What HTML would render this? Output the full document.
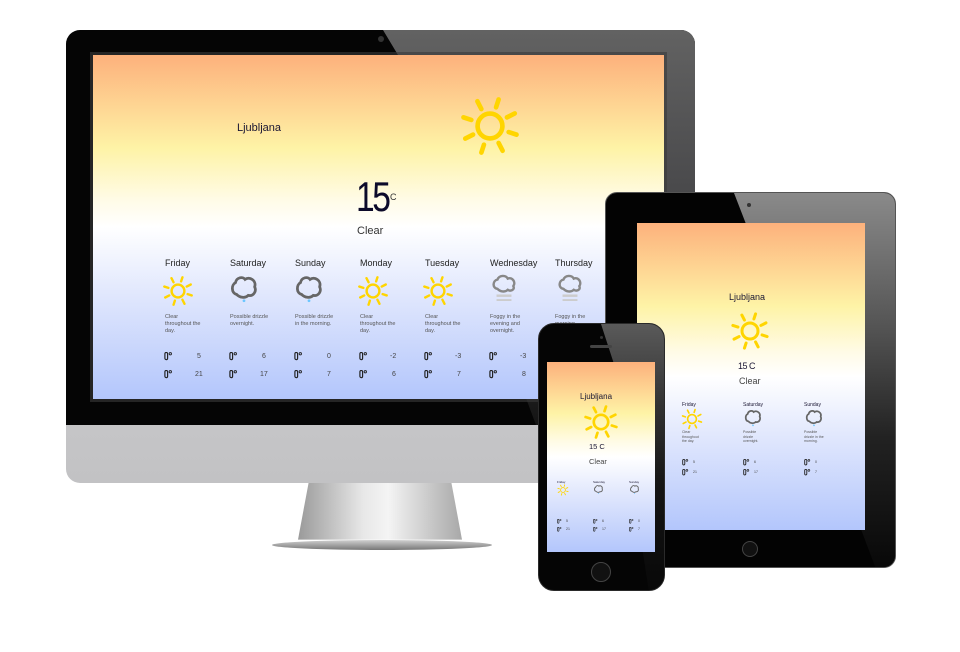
<!DOCTYPE html>
<html><head><meta charset="utf-8"><style>
*{margin:0;padding:0;box-sizing:border-box}
body{width:960px;height:652px;background:#fff;position:relative;overflow:hidden;font-family:"Liberation Sans",sans-serif;color:#1a1633}
.a{position:absolute}
.grad{background:linear-gradient(to bottom,#fdb17c 0%,#fef3a6 27%,#fffbe6 42%,#ffffff 50%,#e3e9fd 68%,#b3c6fc 100%)}
.t{position:absolute;white-space:nowrap}
.d{font-size:9px;color:#222}
.ds{font-size:5.5px;line-height:7px;color:#555;white-space:normal}
.n{font-size:7px;color:#444}
.m{font-size:3.5px;color:#444}
</style></head><body>
<svg width="0" height="0" style="position:absolute">
<defs>
<symbol id="sun" viewBox="-30 -30 60 60"><g stroke="#ffd500" stroke-width="4.5" stroke-linecap="round" fill="none"><circle r="12"/><g transform="rotate(18)"><line x1="0" y1="-19" x2="0" y2="-27"/><line x1="0" y1="19" x2="0" y2="27"/><line x1="-19" y1="0" x2="-27" y2="0"/><line x1="19" y1="0" x2="27" y2="0"/><line x1="13" y1="-13" x2="19" y2="-19"/><line x1="-13" y1="13" x2="-19" y2="19"/><line x1="-13" y1="-13" x2="-19" y2="-19"/><line x1="13" y1="13" x2="19" y2="19"/></g></g></symbol>
<symbol id="cloud" viewBox="0 0 30 30"><path d="M8 20 C3 19 3 11 7 9 C8 4 14 3 16 6 C20 3 27 7 25 13 C27 17 24 22 19 21 C16 24 11 23 8 20 Z" fill="none" stroke="#666" stroke-width="2.6"/><circle cx="15" cy="26" r="1.3" fill="#6cc6ff"/></symbol>
<symbol id="fog" viewBox="0 0 30 30"><path d="M8 17 C2 16 3 8 8 7 C10 2 17 2 19 6 C24 4 28 10 25 14 C27 18 22 20 19 18 C16 21 11 20 8 17 Z" fill="none" stroke="#888" stroke-width="2.6"/><rect x="7" y="23" width="16" height="2.6" fill="#ccc"/><rect x="7" y="28" width="16" height="2" fill="#ccc"/></symbol>
<symbol id="th" viewBox="0 0 10 10"><rect x="1" y="0.5" width="3" height="8" rx="1.5" fill="none" stroke="#222" stroke-width="1.3"/><circle cx="7" cy="2" r="1.3" fill="none" stroke="#222" stroke-width="1"/></symbol>
</defs></svg>

<!-- Monitor -->
<div class="a" style="left:298px;top:478px;width:164px;height:70px;background:linear-gradient(to right,#9a9a9a,#e8e8e8 40%,#f4f4f4 55%,#a8a8a8);clip-path:polygon(7% 0,93% 0,100% 88%,0 88%)"></div>
<div class="a" style="left:272px;top:540px;width:220px;height:10px;border-radius:50%;background:linear-gradient(#d0d0d0,#777)"></div>
<div class="a" style="left:66px;top:30px;width:629px;height:453px;border-radius:14px;background:linear-gradient(to bottom,#dcdcde,#c2c2c4);"></div>
<div class="a" style="left:66px;top:30px;width:629px;height:395px;border-radius:14px 14px 0 0;background:#050505;overflow:hidden">
 <div class="a" style="left:0;top:0;width:629px;height:395px;background:linear-gradient(to bottom,#626262,#4a4a4c 40%,#2a2a2a 75%,#151515);clip-path:polygon(317px 0,629px 0,629px 395px,470px 395px,332px 25px)"></div>
</div>
<div class="a" style="left:90px;top:52px;width:577px;height:350px;border:3px solid #3a3a3a;opacity:.6"></div>
<div class="a" style="left:378px;top:36px;width:6px;height:6px;border-radius:50%;background:#333"></div>
<div class="a grad" style="left:93px;top:55px;width:571px;height:344px;overflow:hidden">
 <div class="t" style="left:144px;top:67px;font-size:11px">Ljubljana</div>
 <svg class="a" style="left:366px;top:40px" width="62" height="62"><use href="#sun"/></svg>
 <div class="t" style="left:263px;top:118px;font-size:42px;letter-spacing:-3px;color:#0c0a2a;transform:scaleX(.8);transform-origin:0 0">15</div>
 <div class="t" style="left:297px;top:137px;font-size:9px;color:#333;z-index:2">C</div>
 <div class="t" style="left:264px;top:170px;font-size:11px;color:#333">Clear</div>

 <div class="t d" style="left:72px;top:203px">Friday</div>
 <svg class="a" style="left:69px;top:220px" width="32" height="32"><use href="#sun"/></svg>
 <div class="t ds" style="left:72px;top:259px;width:40px">Clear throughout the day.</div>
 <div class="t d" style="left:137px;top:203px">Saturday</div>
 <svg class="a" style="left:135px;top:218px" width="32" height="32"><use href="#cloud"/></svg>
 <div class="t ds" style="left:137px;top:259px;width:40px">Possible drizzle overnight.</div>
 <div class="t d" style="left:202px;top:203px">Sunday</div>
 <svg class="a" style="left:200px;top:218px" width="32" height="32"><use href="#cloud"/></svg>
 <div class="t ds" style="left:202px;top:259px;width:40px">Possible drizzle in the morning.</div>
 <div class="t d" style="left:267px;top:203px">Monday</div>
 <svg class="a" style="left:264px;top:220px" width="32" height="32"><use href="#sun"/></svg>
 <div class="t ds" style="left:267px;top:259px;width:40px">Clear throughout the day.</div>
 <div class="t d" style="left:332px;top:203px">Tuesday</div>
 <svg class="a" style="left:329px;top:220px" width="32" height="32"><use href="#sun"/></svg>
 <div class="t ds" style="left:332px;top:259px;width:40px">Clear throughout the day.</div>
 <div class="t d" style="left:397px;top:203px">Wednesday</div>
 <svg class="a" style="left:397px;top:218px" width="28" height="28"><use href="#fog"/></svg>
 <div class="t ds" style="left:397px;top:259px;width:42px">Foggy in the evening and overnight.</div>
 <div class="t d" style="left:462px;top:203px">Thursday</div>
 <svg class="a" style="left:463px;top:218px" width="28" height="28"><use href="#fog"/></svg>
 <div class="t ds" style="left:462px;top:259px;width:42px">Foggy in the morning.</div>

 <svg class="a" style="left:71px;top:297px" width="9" height="9"><use href="#th"/></svg><div class="t n" style="left:104px;top:298px">5</div>
 <svg class="a" style="left:71px;top:315px" width="9" height="9"><use href="#th"/></svg><div class="t n" style="left:102px;top:316px">21</div>
 <svg class="a" style="left:136px;top:297px" width="9" height="9"><use href="#th"/></svg><div class="t n" style="left:169px;top:298px">6</div>
 <svg class="a" style="left:136px;top:315px" width="9" height="9"><use href="#th"/></svg><div class="t n" style="left:167px;top:316px">17</div>
 <svg class="a" style="left:201px;top:297px" width="9" height="9"><use href="#th"/></svg><div class="t n" style="left:234px;top:298px">0</div>
 <svg class="a" style="left:201px;top:315px" width="9" height="9"><use href="#th"/></svg><div class="t n" style="left:234px;top:316px">7</div>
 <svg class="a" style="left:266px;top:297px" width="9" height="9"><use href="#th"/></svg><div class="t n" style="left:297px;top:298px">-2</div>
 <svg class="a" style="left:266px;top:315px" width="9" height="9"><use href="#th"/></svg><div class="t n" style="left:299px;top:316px">6</div>
 <svg class="a" style="left:331px;top:297px" width="9" height="9"><use href="#th"/></svg><div class="t n" style="left:362px;top:298px">-3</div>
 <svg class="a" style="left:331px;top:315px" width="9" height="9"><use href="#th"/></svg><div class="t n" style="left:364px;top:316px">7</div>
 <svg class="a" style="left:396px;top:297px" width="9" height="9"><use href="#th"/></svg><div class="t n" style="left:427px;top:298px">-3</div>
 <svg class="a" style="left:396px;top:315px" width="9" height="9"><use href="#th"/></svg><div class="t n" style="left:429px;top:316px">8</div>
</div>

<!-- Tablet -->
<div class="a" style="left:605px;top:192px;width:291px;height:376px;border-radius:12px;background:#030303;border:1px solid #555;overflow:hidden">
 <div class="a" style="left:0;top:0;width:291px;height:376px;background:linear-gradient(to bottom,#8a8a8a,#555 35%,#222 65%,#080808);clip-path:polygon(128px 0,291px 0,291px 376px,270px 376px,140px 31px)"></div>
</div>
<div class="a" style="left:747px;top:203px;width:4px;height:4px;border-radius:50%;background:#333"></div>
<div class="a" style="left:742px;top:541px;width:16px;height:16px;border-radius:50%;background:#111;border:1px solid #444"></div>
<div class="a grad" style="left:637px;top:223px;width:228px;height:307px;overflow:hidden">
 <div class="t" style="left:92px;top:69px;font-size:9px">Ljubljana</div>
 <svg class="a" style="left:93px;top:88px" width="40" height="40"><use href="#sun"/></svg>
 <div class="t" style="left:101px;top:138px;font-size:9px;letter-spacing:-.5px">15 C</div>
 <div class="t" style="left:102px;top:153px;font-size:9px;color:#444">Clear</div>
 <div class="t" style="left:45px;top:179px;font-size:5px">Friday</div>
 <div class="t" style="left:106px;top:179px;font-size:5px">Saturday</div>
 <div class="t" style="left:167px;top:179px;font-size:5px">Sunday</div>
 <svg class="a" style="left:44px;top:185px" width="22" height="22"><use href="#sun"/></svg>
 <svg class="a" style="left:106px;top:185px" width="20" height="20"><use href="#cloud"/></svg>
 <svg class="a" style="left:167px;top:185px" width="20" height="20"><use href="#cloud"/></svg>
 <div class="t ds" style="left:45px;top:207px;width:22px;font-size:3.5px;line-height:4.5px">Clear throughout the day.</div>
 <div class="t ds" style="left:106px;top:207px;width:22px;font-size:3.5px;line-height:4.5px">Possible drizzle overnight.</div>
 <div class="t ds" style="left:167px;top:207px;width:22px;font-size:3.5px;line-height:4.5px">Possible drizzle in the morning.</div>
 <svg class="a" style="left:45px;top:236px" width="7" height="7"><use href="#th"/></svg><div class="t m" style="left:56px;top:237px">5</div>
 <svg class="a" style="left:45px;top:246px" width="7" height="7"><use href="#th"/></svg><div class="t m" style="left:56px;top:247px">21</div>
 <svg class="a" style="left:106px;top:236px" width="7" height="7"><use href="#th"/></svg><div class="t m" style="left:117px;top:237px">6</div>
 <svg class="a" style="left:106px;top:246px" width="7" height="7"><use href="#th"/></svg><div class="t m" style="left:117px;top:247px">17</div>
 <svg class="a" style="left:167px;top:236px" width="7" height="7"><use href="#th"/></svg><div class="t m" style="left:178px;top:237px">0</div>
 <svg class="a" style="left:167px;top:246px" width="7" height="7"><use href="#th"/></svg><div class="t m" style="left:178px;top:247px">7</div>
</div>

<!-- Phone -->
<div class="a" style="left:538px;top:323px;width:127px;height:268px;border-radius:16px;background:#050505;border:1.5px solid #2a2a2a;overflow:hidden">
 <div class="a" style="left:0;top:0;width:127px;height:268px;background:linear-gradient(to bottom,#5a5a5a,#333 30%,#151515 60%,#080808);clip-path:polygon(62px 0,127px 0,127px 268px,110px 268px,75px 40px)"></div>
</div>
<div class="a" style="left:590px;top:345px;width:22px;height:3px;border-radius:2px;background:#444"></div>
<div class="a" style="left:600px;top:336px;width:3px;height:3px;border-radius:50%;background:#333"></div>
<div class="a" style="left:591px;top:562px;width:20px;height:20px;border-radius:50%;background:#111;border:1px solid #444"></div>
<div class="a grad" style="left:547px;top:362px;width:108px;height:190px;overflow:hidden">
 <div class="t" style="left:33px;top:30px;font-size:8px">Ljubljana</div>
 <svg class="a" style="left:36px;top:42px" width="36" height="36"><use href="#sun"/></svg>
 <div class="t" style="left:42px;top:80px;font-size:7.5px">15 C</div>
 <div class="t" style="left:42px;top:95px;font-size:7.5px;color:#444">Clear</div>
 <div class="t" style="left:10px;top:118px;font-size:3px">Friday</div>
 <div class="t" style="left:46px;top:118px;font-size:3px">Saturday</div>
 <div class="t" style="left:82px;top:118px;font-size:3px">Sunday</div>
 <svg class="a" style="left:10px;top:122px" width="12" height="12"><use href="#sun"/></svg>
 <svg class="a" style="left:46px;top:122px" width="11" height="11"><use href="#cloud"/></svg>
 <svg class="a" style="left:82px;top:122px" width="11" height="11"><use href="#cloud"/></svg>
 <svg class="a" style="left:10px;top:157px" width="5" height="5"><use href="#th"/></svg><div class="t m" style="left:19px;top:157px">5</div>
 <svg class="a" style="left:10px;top:165px" width="5" height="5"><use href="#th"/></svg><div class="t m" style="left:19px;top:165px">21</div>
 <svg class="a" style="left:46px;top:157px" width="5" height="5"><use href="#th"/></svg><div class="t m" style="left:55px;top:157px">6</div>
 <svg class="a" style="left:46px;top:165px" width="5" height="5"><use href="#th"/></svg><div class="t m" style="left:55px;top:165px">17</div>
 <svg class="a" style="left:82px;top:157px" width="5" height="5"><use href="#th"/></svg><div class="t m" style="left:91px;top:157px">0</div>
 <svg class="a" style="left:82px;top:165px" width="5" height="5"><use href="#th"/></svg><div class="t m" style="left:91px;top:165px">7</div>
</div>
</body></html>
